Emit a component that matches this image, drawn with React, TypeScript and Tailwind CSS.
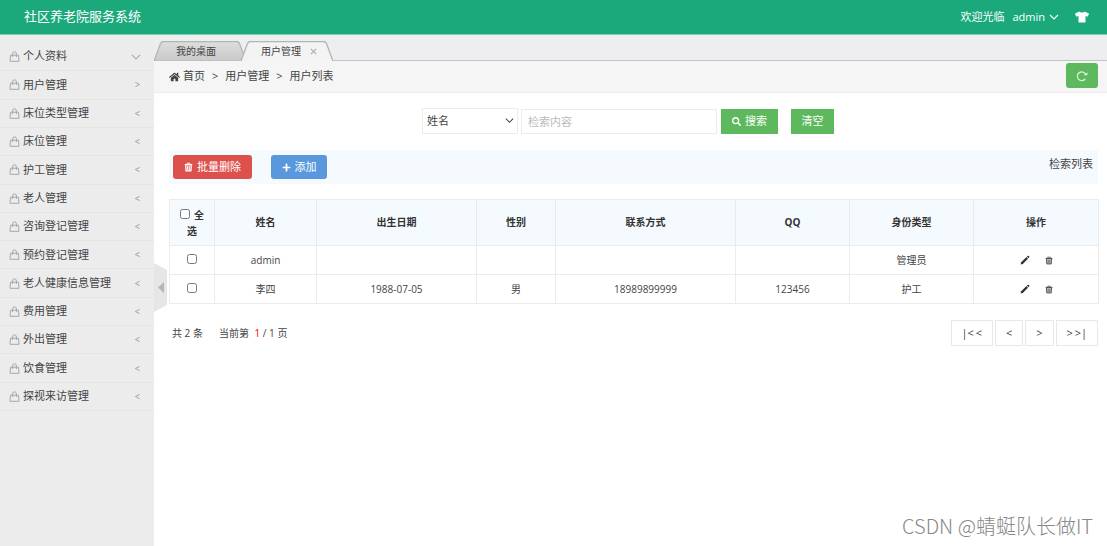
import { useState } from 'react';
import type { ReactNode } from 'react';
import { FaHome, FaPlus, FaSearch, FaTshirt } from 'react-icons/fa';

interface MenuItem {
  label: string;
  arrow: 'down' | 'right' | 'left';
}

interface User {
  id: number;
  name: string;
  birthday: string;
  gender: string;
  phone: string;
  qq: string;
  role: string;
}

const MENU: MenuItem[] = [
  { label: '个人资料', arrow: 'down' },
  { label: '用户管理', arrow: 'right' },
  { label: '床位类型管理', arrow: 'left' },
  { label: '床位管理', arrow: 'left' },
  { label: '护工管理', arrow: 'left' },
  { label: '老人管理', arrow: 'left' },
  { label: '咨询登记管理', arrow: 'left' },
  { label: '预约登记管理', arrow: 'left' },
  { label: '老人健康信息管理', arrow: 'left' },
  { label: '费用管理', arrow: 'left' },
  { label: '外出管理', arrow: 'left' },
  { label: '饮食管理', arrow: 'left' },
  { label: '探视来访管理', arrow: 'left' },
];

const USERS: User[] = [
  { id: 1, name: 'admin', birthday: '', gender: '', phone: '', qq: '', role: '管理员' },
  { id: 2, name: '李四', birthday: '1988-07-05', gender: '男', phone: '18989899999', qq: '123456', role: '护工' },
];

const ARROWS = {
  down: 'M1 3 L5 7 L9 3',
  right: 'M2 2 L8 5 L2 8',
  left: 'M8 2 L2 5 L8 8',
};

function Arrow({ direction, className }: { direction: MenuItem['arrow']; className: string }) {
  return (
    <svg viewBox="0 0 10 10" fill="none" stroke="currentColor" strokeWidth="1.2" className={className}>
      <path d={ARROWS[direction]} />
    </svg>
  );
}

function BagIcon() {
  return (
    <svg viewBox="0 0 11 11" fill="none" stroke="currentColor" className="w-[11px] h-[11px] text-[#a3a8b3]">
      <path d="M1.5 4.2 H9.5 L10 10.3 H1 Z" />
      <path d="M3.6 6 V3 Q3.6 0.8 5.5 0.8 Q7.4 0.8 7.4 3 V6" />
    </svg>
  );
}

function TrashIcon({ className }: { className: string }) {
  return (
    <svg viewBox="0 0 10 10" fill="none" stroke="currentColor" className={className}>
      <path d="M0.8 2.4 H9.2" strokeWidth="1.4" />
      <path d="M3.4 2.2 V0.8 H6.6 V2.2" />
      <path d="M1.8 3 L2.2 9.3 H7.8 L8.2 3" fill="currentColor" fillOpacity="0.35" strokeWidth="1.2" />
      <path d="M4 4 V8.5 M6 4 V8.5" strokeWidth="0.9" />
    </svg>
  );
}

function PencilIcon() {
  return (
    <svg viewBox="0 0 10 10" fill="currentColor" className="w-[10px] h-[10px] text-[#333]">
      <path d="M0.6 9.5 L1.2 7.3 L6.4 2.1 L8 3.7 L2.8 8.9 Z" />
      <path d="M6.9 1.6 L7.7 0.8 Q8.2 0.4 8.8 1 L9.2 1.4 Q9.7 1.9 9.2 2.5 L8.5 3.2 Z" />
    </svg>
  );
}

function ReloadIcon() {
  return (
    <svg viewBox="0 0 12 12" fill="none" stroke="currentColor" className="w-3 h-3 text-[#dcf5dc]">
      <path d="M9.2 9 A4.4 4.4 0 1 1 10 5" strokeWidth="1.2" />
      <path d="M7.4 5.2 H11.4 V2.6 Z" fill="currentColor" stroke="none" />
    </svg>
  );
}

function Tab({ children, active, className }: { children: ReactNode; active?: boolean; className: string }) {
  return (
    <div className={`relative h-5 ${className}`}>
      <svg viewBox="0 0 92 20" preserveAspectRatio="none" className="absolute inset-0 w-full h-full">
        <defs>
          <linearGradient id="tabShade" x1="0" y1="0" x2="0" y2="1">
            <stop offset="0" stopColor="#dedede" />
            <stop offset="1" stopColor="#c9c9c9" />
          </linearGradient>
        </defs>
        <path
          d="M0 20 L6.5 2.5 Q7.3 0.5 9.5 0.5 H82.5 Q84.7 0.5 85.5 2.5 L92 20"
          fill={active ? '#f3f3f4' : 'url(#tabShade)'}
          stroke="#b4b4b4"
          strokeWidth="1.3"
        />
        {!active && <path d="M0 19.5 H92" stroke="#c0c0c0" />}
      </svg>
      <div className="relative flex h-full items-center">{children}</div>
    </div>
  );
}

function PageButton({ children, label }: { children: ReactNode; label: string }) {
  return (
    <button aria-label={label} className="h-[26px] px-[10px] border border-[#e8e8e8] bg-white hover:bg-gray-50">
      {children}
    </button>
  );
}

export default function App() {
  const [selected, setSelected] = useState<number[]>([]);
  const [field, setField] = useState('name');
  const [keyword, setKeyword] = useState('');

  const allSelected = selected.length === USERS.length;

  const toggle = (id: number) => {
    setSelected(selected.includes(id) ? selected.filter((item) => item !== id) : [...selected, id]);
  };

  return (
    <div className="relative min-h-screen flex flex-col bg-white text-[11px] text-[#444] font-['Open_Sans','Noto_Sans_CJK_SC',sans-serif]">
      <header className="h-[35px] shrink-0 flex items-center justify-between pl-6 pr-[18px] bg-[#1ba97b] border-b border-[#7ccdb1] text-white">
        <h1 className="text-[13px]">社区养老院服务系统</h1>
        <div className="flex items-center">
          <span className="mr-2">欢迎光临</span>
          <button className="flex items-center gap-1">
            admin
            <Arrow direction="down" className="w-[10px] h-[10px]" />
          </button>
          <button aria-label="换肤" className="ml-4">
            <FaTshirt className="w-[14px] h-3" />
          </button>
        </div>
      </header>

      <div className="flex flex-1">
        {/* Sidebar */}
        <aside className="w-[154px] shrink-0 pt-2 bg-[#ececec]">
          <nav className="grid auto-rows-fr h-[368px]">
            {MENU.map((item) => (
              <a key={item.label} href="#" className="flex items-center pl-[9px] pr-[13px] border-b border-[#e4e4e4]">
                <BagIcon />
                <span className="ml-[3px] flex-1">{item.label}</span>
                <Arrow
                  direction={item.arrow}
                  className={item.arrow === 'down' ? 'w-[10px] h-[10px] text-[#b0b0b0]' : 'w-[7px] h-[9px] text-[#999]'}
                />
              </a>
            ))}
          </nav>
        </aside>

        <main className="relative flex-1 min-w-0">
          {/* Tabs */}
          <div className="h-[26px] flex items-end bg-[#eeeef0] border-b border-[#c4c4c4] text-[10px]">
            <Tab className="w-[92px] -mb-px">
              <a href="#" className="pl-[22px]">我的桌面</a>
            </Tab>
            <Tab active className="w-[92px] -ml-[5px] -mb-px">
              <a href="#" className="pl-5">用户管理</a>
              <button aria-label="关闭" className="ml-[9px]">
                <svg viewBox="0 0 8 8" stroke="#aaa" strokeWidth="1.2" className="w-[7px] h-[7px]">
                  <path d="M1 1 L7 7 M7 1 L1 7" />
                </svg>
              </button>
            </Tab>
          </div>

          {/* Breadcrumb */}
          <div className="h-8 flex items-center justify-between pl-[15px] pr-[9px] bg-[#f5f5f5] border-b border-[#ebebeb]">
            <nav className="flex items-center">
              <FaHome className="w-[11px] h-[10px] mr-[3px]" />
              <a href="#">首页</a>
              <span className="mx-[7px]">&gt;</span>
              <a href="#">用户管理</a>
              <span className="mx-[7px]">&gt;</span>
              <span>用户列表</span>
            </nav>
            <button aria-label="刷新" className="w-8 h-[25px] mb-[2px] flex items-center justify-center rounded-[3px] bg-[#5eb95e]">
              <ReloadIcon />
            </button>
          </div>

          <div className="pl-[15px] pr-[9px] pt-[15px]">
            {/* Search */}
            <form className="flex items-center justify-center pr-[11px]" onSubmit={(e) => e.preventDefault()}>
              <div className="relative mr-[3px]">
                <select
                  aria-label="检索字段"
                  value={field}
                  onChange={(e) => setField(e.target.value)}
                  className="appearance-none w-24 h-[26px] px-1 border border-[#ececec] bg-white"
                >
                  <option value="name">姓名</option>
                </select>
                <Arrow direction="down" className="absolute right-1 top-2 w-[9px] h-[9px] pointer-events-none" />
              </div>
              <input
                type="text"
                aria-label="检索内容"
                value={keyword}
                onChange={(e) => setKeyword(e.target.value)}
                placeholder="检索内容"
                className="w-[196px] h-[25px] px-[6px] border border-[#ececec] placeholder:text-[#bbb]"
              />
              <button className="ml-1 w-[57px] h-[25px] flex items-center justify-center gap-1 bg-[#5eb95e] text-white">
                <FaSearch className="w-[9px] h-[9px]" />
                搜索
              </button>
              <button type="button" onClick={() => setKeyword('')} className="ml-[13px] w-[43px] h-[25px] bg-[#5eb95e] text-white">
                清空
              </button>
            </form>

            {/* Toolbar */}
            <div className="mt-4 h-[34px] px-1 flex items-center justify-between bg-[#f5fafe]">
              <div className="flex gap-[19px]">
                <button className="w-[79px] h-6 flex items-center justify-center gap-1 rounded-[3px] bg-[#dd514c] text-white">
                  <TrashIcon className="w-[9px] h-[10px]" />
                  批量删除
                </button>
                <button className="w-[56px] h-6 flex items-center justify-center gap-1 rounded-[3px] bg-[#5a98de] text-white">
                  <FaPlus className="w-[9px] h-[9px]" />
                  添加
                </button>
              </div>
              <span className="pb-[6px] pr-px">检索列表</span>
            </div>

            {/* Users */}
            <table className="mt-[15px] w-full table-fixed border-collapse text-[10px] text-center [&_td]:border [&_td]:border-[#ebebeb] [&_th]:border [&_th]:border-[#ebebeb]">
              <colgroup>
                <col className="w-[45px]" />
                <col className="w-[102px]" />
                <col className="w-[160px]" />
                <col className="w-[79px]" />
                <col className="w-[180px]" />
                <col className="w-[114px]" />
                <col className="w-[124px]" />
                <col className="w-[125px]" />
              </colgroup>
              <thead className="bg-[#f5fafe] text-[#333]">
                <tr className="h-[46px]">
                  <th className="px-2 leading-4">
                    <label>
                      <input
                        type="checkbox"
                        checked={allSelected}
                        onChange={() => setSelected(allSelected ? [] : USERS.map((user) => user.id))}
                        className="w-[10px] h-[10px] mr-1 align-baseline"
                      />
                      全选
                    </label>
                  </th>
                  <th>姓名</th>
                  <th>出生日期</th>
                  <th>性别</th>
                  <th>联系方式</th>
                  <th>QQ</th>
                  <th>身份类型</th>
                  <th>操作</th>
                </tr>
              </thead>
              <tbody>
                {USERS.map((user) => (
                  <tr key={user.id} className="h-[29px]">
                    <td className="pb-1">
                      <input
                        type="checkbox"
                        aria-label={user.name}
                        checked={selected.includes(user.id)}
                        onChange={() => toggle(user.id)}
                        className="w-[10px] h-[10px] align-middle"
                      />
                    </td>
                    <td>{user.name}</td>
                    <td>{user.birthday}</td>
                    <td>{user.gender}</td>
                    <td>{user.phone}</td>
                    <td>{user.qq}</td>
                    <td>{user.role}</td>
                    <td>
                      <div className="flex items-center justify-center gap-[15px]">
                        <button aria-label="编辑"><PencilIcon /></button>
                        <button aria-label="删除"><TrashIcon className="w-[8px] h-[9px] text-[#555]" /></button>
                      </div>
                    </td>
                  </tr>
                ))}
              </tbody>
            </table>

            {/* Pagination */}
            <div className="mt-4 flex items-center justify-between">
              <div className="pl-[3px] flex gap-4 text-[10px]">
                <span>共 2 条</span>
                <span>
                  当前第 <span className="ml-[3px] text-[#f00]">1</span> / 1 页
                </span>
              </div>
              <div className="flex gap-[2px]">
                <PageButton label="首页">|&lt;&thinsp;&lt;</PageButton>
                <PageButton label="上一页">&lt;</PageButton>
                <PageButton label="下一页">&gt;</PageButton>
                <PageButton label="末页">&gt;&thinsp;&gt;|</PageButton>
              </div>
            </div>
          </div>

          {/* Sidebar collapse handle */}
          <button aria-label="收起菜单" className="absolute left-0 top-[228px]">
            <svg viewBox="0 0 13 49" className="w-[13px] h-[49px]">
              <path d="M0 0 L13 7 V42 L0 49 Z" fill="#e6e6e6" />
              <path d="M10 19 V30 L4 24.5 Z" fill="#b5b5b5" />
            </svg>
          </button>
        </main>
      </div>

      <div className="absolute right-[14px] bottom-[6px] text-[20px] leading-7 font-light text-[#888] font-['Noto_Sans_CJK_SC',sans-serif]">
        CSDN @蜻蜓队长做IT
      </div>
    </div>
  );
}
